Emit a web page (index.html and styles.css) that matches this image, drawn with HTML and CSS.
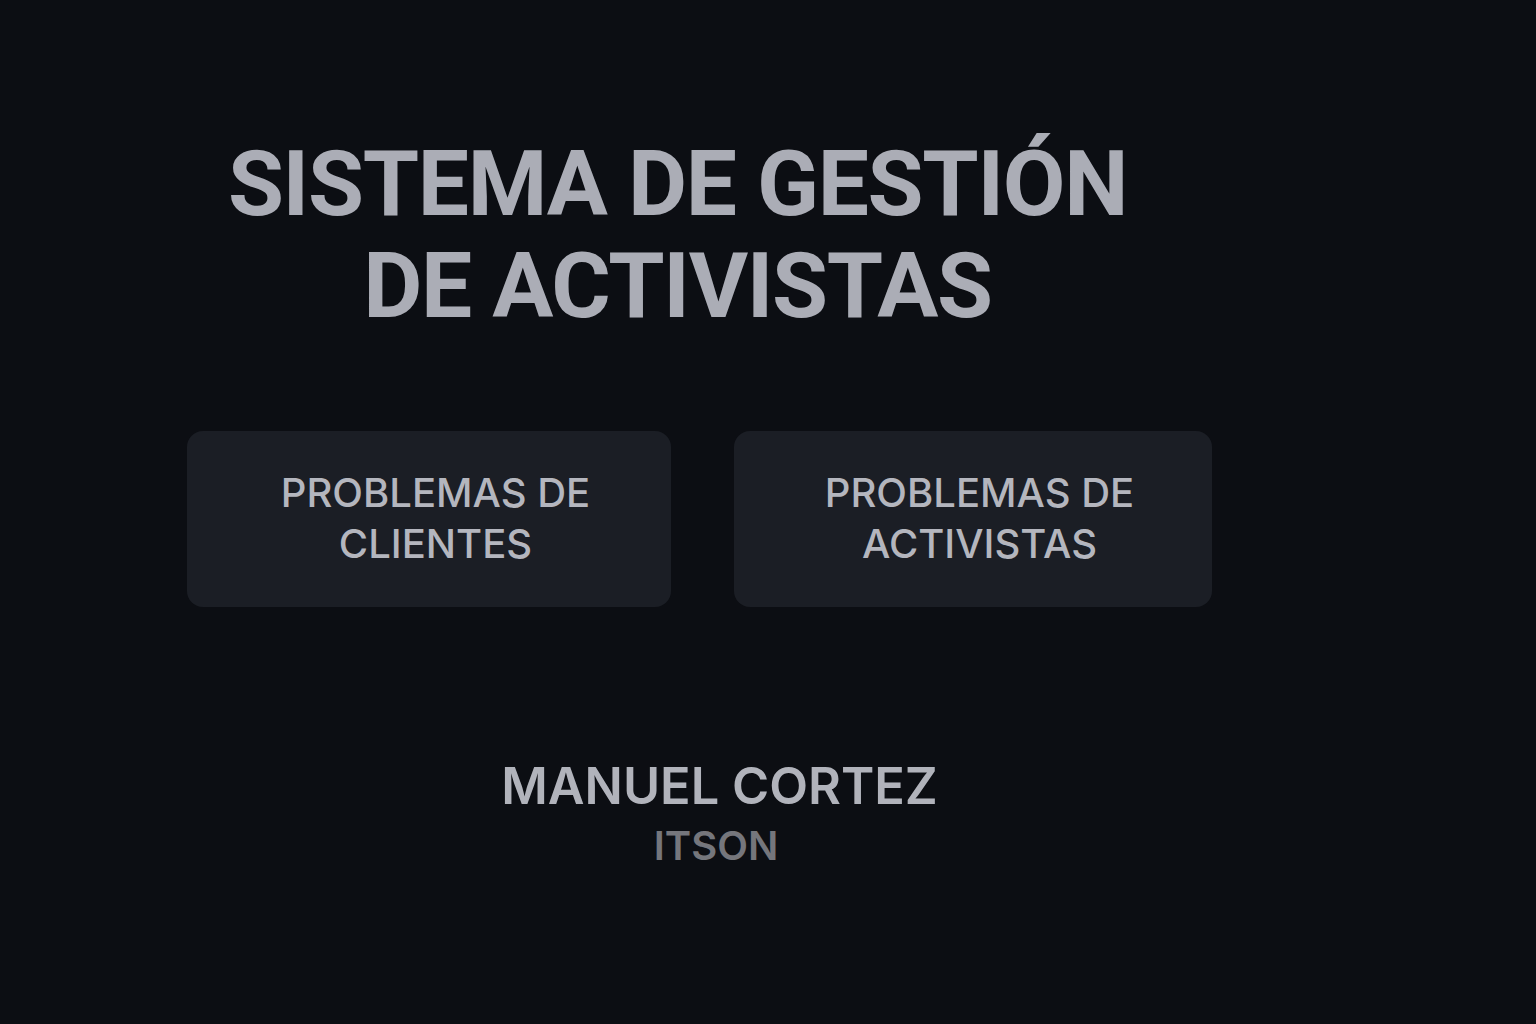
FILE: index.html
```html
<!DOCTYPE html>
<html lang="es">
<head>
<meta charset="utf-8">
<title>Sistema de Gestión de Activistas</title>
<link rel="stylesheet" href="styles.css">
</head>
<body>
<main class="page">
  <h1 class="title">SISTEMA DE GESTIÓN<br>DE ACTIVISTAS</h1>
  <div class="actions">
    <button class="card card-left">PROBLEMAS DE<br>CLIENTES</button>
    <button class="card card-right">PROBLEMAS DE<br>ACTIVISTAS</button>
  </div>
  <footer class="author">
    <div class="name">MANUEL CORTEZ</div>
    <div class="org">ITSON</div>
  </footer>
</main>
</body>
</html>
```
FILE: styles.css
```css
html, body {
  margin: 0;
  padding: 0;
  background: #0c0e13;
  height: 100%;
}
body {
  font-family: Inter, "Noto Sans", "Liberation Sans", sans-serif;
  color: #abadb6;
}
.page {
  width: 1025px;
  margin-left: 187px;
  padding-top: 133px;
  display: flex;
  flex-direction: column;
  align-items: center;
}
.title {
  margin: 0 44px 0 0;
  font-family: Roboto, "Liberation Sans", Arial, sans-serif;
  font-size: 91px;
  font-weight: 700;
  line-height: 102px;
  letter-spacing: -1.3px;
  text-align: center;
  color: #abadb6;
}
.actions {
  margin-top: 94px;
  display: flex;
  gap: 63px;
  width: 100%;
}
.card {
  height: 176px;
  border: none;
  border-radius: 16px;
  background: #1b1e25;
  color: #b4b6be;
  font-family: inherit;
  font-size: 40px;
  font-weight: 500;
  line-height: 51px;
  text-align: center;
  padding: 0 0 2px 13px;
}
.card-left { width: 484px; }
.card-right { width: 478px; }
.author {
  margin: 150px 0 0 40px;
  text-align: center;
}
.name {
  font-size: 50.5px;
  font-weight: 600;
  line-height: 58px;
  color: #b1b3bb;
}
.org {
  margin: 6px 7px 0 0;
  font-size: 40px;
  font-weight: 600;
  line-height: 50px;
  color: #75767c;
}
```
